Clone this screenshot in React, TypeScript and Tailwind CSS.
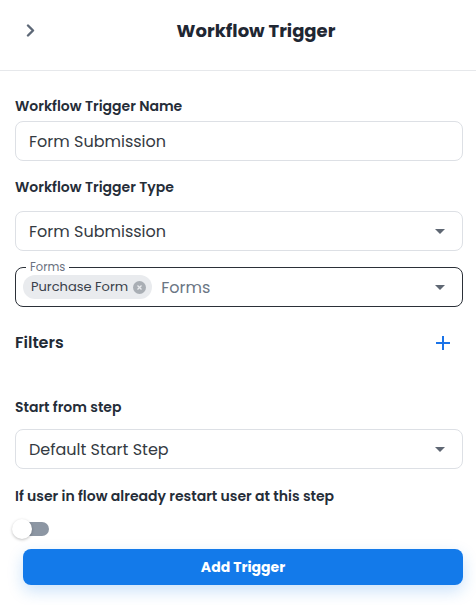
import React from "react";

const font = { fontFamily: "Poppins, 'Open Sans', 'Noto Sans', sans-serif" };

function Caret() {
  return (
    <svg width="10" height="5" viewBox="0 0 10 5" className="shrink-0">
      <path d="M0 0 L10 0 L5 5 Z" fill="#5f6773" />
    </svg>
  );
}

function Select({ value }: { value: string }) {
  return (
    <div className="h-[40px] rounded-[8px] border border-[#dde0e5] flex items-center pl-[13px] pr-[17px] justify-between">
      <span className="text-[16px] text-[#343a42] mt-[1px]">{value}</span>
      <Caret />
    </div>
  );
}

export default function App() {
  return (
    <div className="w-[476px] h-[605px] bg-white overflow-hidden relative" style={font}>
      <div className="h-[71px] border-b border-[#e6e8eb] flex items-center">
        <div className="w-[36px] flex items-center">
          <svg width="10" height="13" viewBox="0 0 10 13" className="ml-[26px] -mt-[10px]">
            <path d="M2 1.5 L7 6.5 L2 11.5" stroke="#5d6877" strokeWidth="2.4" fill="none" strokeLinecap="round" strokeLinejoin="round" />
          </svg>
        </div>
        <div className="flex-1 text-center text-[18px] font-bold text-[#1f2733] -mt-[10px]">Workflow Trigger</div>
      </div>

      <div className="pl-[15px] pr-[13px]">
        <div className="mt-[25px] h-[20px] leading-[20px] text-[14px] font-semibold text-[#252d38]">Workflow Trigger Name</div>
        <div className="mt-[5px] h-[40px] rounded-[8px] border border-[#dde0e5] flex items-center pl-[13px]">
          <span className="text-[16px] text-[#343a42] mt-[1px]">Form Submission</span>
        </div>

        <div className="mt-[16px] h-[20px] leading-[20px] text-[14px] font-semibold text-[#252d38]">Workflow Trigger Type</div>
        <div className="mt-[14px]">
          <Select value="Form Submission" />
        </div>

        <div className="mt-[16px] relative h-[40px] rounded-[8px] border border-[#2b3038] flex items-center pl-[7px] pr-[17px]">
          <span className="absolute -top-[9px] left-[10px] bg-white px-[4px] text-[11.5px] leading-[16px] text-[#6b7280]">Forms</span>
          <div className="h-[24px] rounded-full bg-[#e9ebee] flex items-center pl-[8px] pr-[6px] gap-[5px]">
            <span className="text-[13px] text-[#3a414a]">Purchase Form</span>
            <svg width="13" height="13" viewBox="0 0 13 13">
              <circle cx="6.5" cy="6.5" r="6.5" fill="#a9aeb4" />
              <path d="M4.5 4.5 L8.5 8.5 M8.5 4.5 L4.5 8.5" stroke="#e9ebee" strokeWidth="1.3" />
            </svg>
          </div>
          <span className="ml-[9px] text-[16px] text-[#6b7684] flex-1 mt-[1px]">Forms</span>
          <Caret />
        </div>

        <div className="mt-[24px] h-[24px] flex items-center justify-between">
          <span className="text-[16px] font-semibold text-[#222a35]">Filters</span>
          <svg width="14" height="14" viewBox="0 0 14 14" className="mr-[13px]">
            <path d="M7 0 V14 M0 7 H14" stroke="#1a73e8" strokeWidth="2" />
          </svg>
        </div>

        <div className="mt-[42px] h-[20px] leading-[20px] text-[14px] font-semibold text-[#252d38]">Start from step</div>
        <div className="mt-[12px]">
          <Select value="Default Start Step" />
        </div>

        <div className="mt-[17px] h-[20px] leading-[20px] text-[14px] font-semibold text-[#252d38]">If user in flow already restart user at this step</div>

        <div className="mt-[13px] relative w-[38px] h-[20px] -ml-[3px]">
          <div className="absolute left-[3px] top-[3px] w-[34px] h-[14px] rounded-full bg-[#8c96a3]" />
          <div className="absolute left-0 top-0 w-[20px] h-[20px] rounded-full bg-white shadow-[0_1px_3px_rgba(0,0,0,0.25)]" />
        </div>
      </div>

      <div className="pr-[13px] pl-[23px] mt-[10px]">
        <button className="w-full h-[36px] rounded-[8px] bg-[#137aea] text-white text-[14px] font-bold shadow-[0_6px_16px_rgba(19,122,234,0.22)]">
          Add Trigger
        </button>
      </div>
    </div>
  );
}
